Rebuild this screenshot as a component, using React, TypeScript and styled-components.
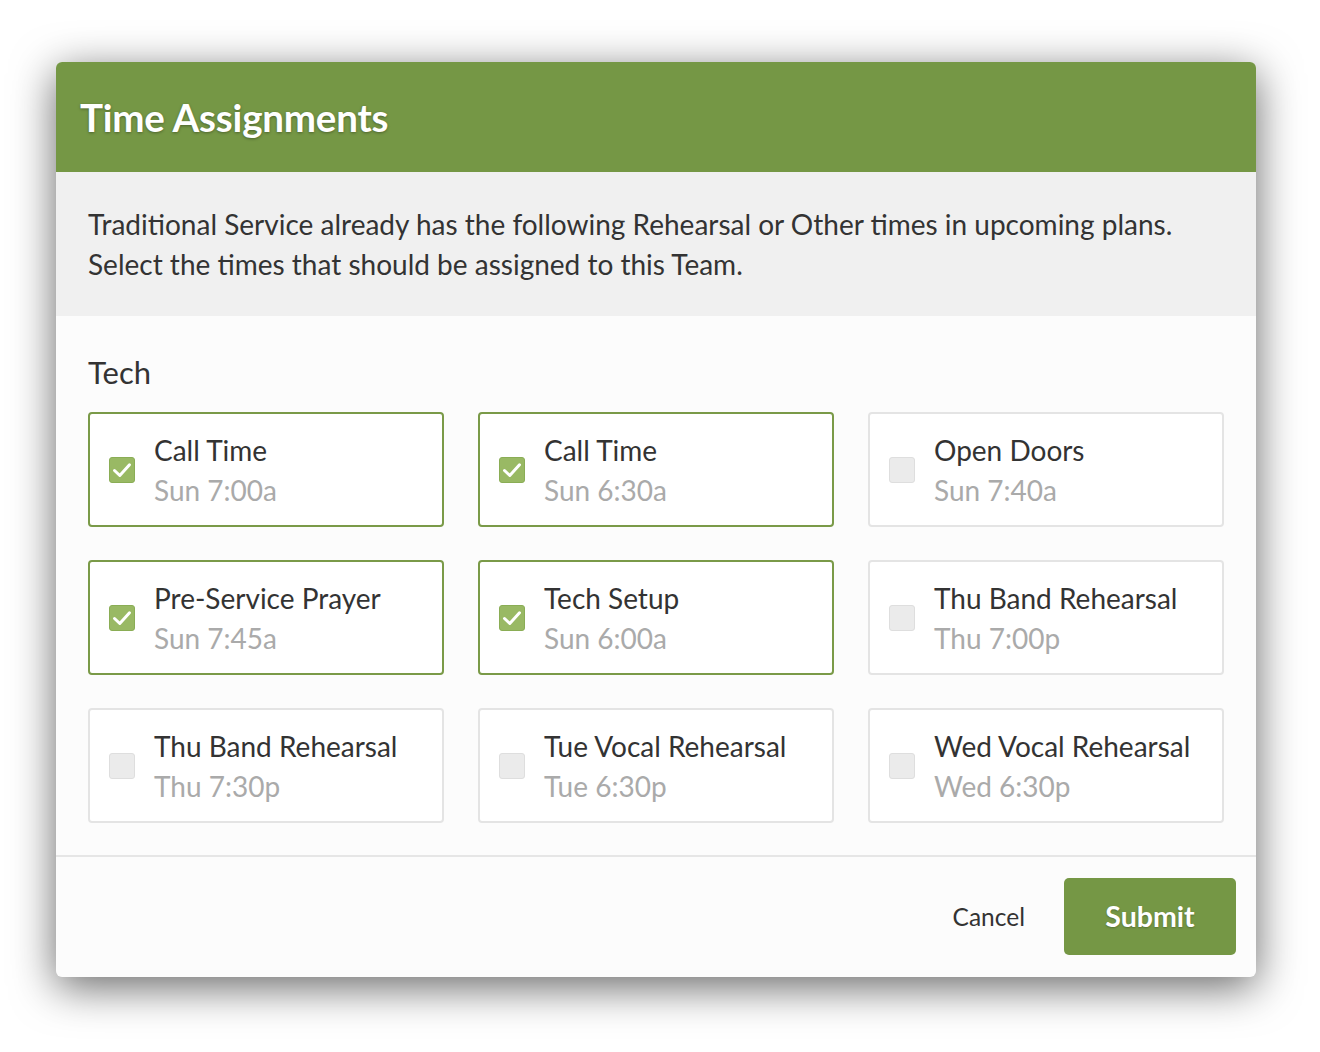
import React from "react";
import styled, { createGlobalStyle } from "styled-components";

const Global = createGlobalStyle`
  html, body { margin: 0; padding: 0; background: #ffffff; }
  body { font-family: Lato, "Open Sans", "Liberation Sans", sans-serif; }
  * { box-sizing: border-box; }
`;

const Page = styled.div`
  width: 1320px;
  height: 1052px;
  padding: 62px 64px 0 56px;
`;

const Modal = styled.div`
  width: 1200px;
  border-radius: 6px;
  background: #fcfcfc;
  box-shadow: 0 10px 44px rgba(0, 0, 0, 0.6);
  overflow: hidden;
`;

const Header = styled.div`
  height: 110px;
  background: #759745;
  display: flex;
  align-items: center;
  padding: 0 24px;
`;

const Title = styled.h1`
  margin: 0;
  font-size: 38.5px;
  font-weight: 700;
  color: #ffffff;
  text-shadow: 0 1px 3px rgba(0, 0, 0, 0.35);
  letter-spacing: -0.2px;
`;

const Intro = styled.div`
  height: 144px;
  background: #f0f0f0;
  padding: 32px 32px;
  font-size: 28px;
  line-height: 40px;
  color: #333333;
`;

const Body = styled.div`
  padding: 36px 32px 32px;
  background: #fcfcfc;
`;

const Section = styled.h2`
  margin: 0 0 20px;
  font-size: 31px;
  line-height: 40px;
  font-weight: 400;
  color: #333333;
`;

const Grid = styled.div`
  display: grid;
  grid-template-columns: repeat(3, 356px);
  column-gap: 34px;
  row-gap: 33px;
`;

const Card = styled.label<{ $on: boolean }>`
  height: 115px;
  border: 2px solid ${(p) => (p.$on ? "#7a9a48" : "#e4e4e4")};
  border-radius: 4px;
  background: #ffffff;
  display: flex;
  align-items: center;
  gap: 19px;
  padding-left: 19px;
  cursor: pointer;
`;

const Box = styled.span<{ $on: boolean }>`
  width: 26px;
  height: 26px;
  border-radius: 3px;
  flex: none;
  display: flex;
  align-items: center;
  justify-content: center;
  background: ${(p) => (p.$on ? "#99b964" : "#ebebeb")};
  border: 1px solid ${(p) => (p.$on ? "#8aad55" : "#dedede")};
`;

const Texts = styled.div`
  display: flex;
  flex-direction: column;
`;

const Name = styled.span`
  font-size: 28px;
  line-height: 40px;
  color: #333333;
`;

const When = styled.span`
  font-size: 28px;
  line-height: 40px;
  color: #aaaaaa;
`;

const Footer = styled.div`
  height: 122px;
  border-top: 2px solid #e6e6e6;
  display: flex;
  align-items: center;
  justify-content: flex-end;
  padding: 0 20px 2px 0;
  gap: 39px;
`;

const Cancel = styled.button`
  border: none;
  background: none;
  padding: 0;
  font-family: inherit;
  font-size: 24.5px;
  color: #333333;
  cursor: pointer;
`;

const Submit = styled.button`
  width: 172px;
  height: 77px;
  border: none;
  border-radius: 5px;
  background: #759745;
  color: #ffffff;
  font-family: inherit;
  font-size: 28.5px;
  font-weight: 700;
  text-shadow: 0 1px 2px rgba(0, 0, 0, 0.25);
  cursor: pointer;
`;

const items = [
  { name: "Call Time", when: "Sun 7:00a", on: true },
  { name: "Call Time", when: "Sun 6:30a", on: true },
  { name: "Open Doors", when: "Sun 7:40a", on: false },
  { name: "Pre-Service Prayer", when: "Sun 7:45a", on: true },
  { name: "Tech Setup", when: "Sun 6:00a", on: true },
  { name: "Thu Band Rehearsal", when: "Thu 7:00p", on: false },
  { name: "Thu Band Rehearsal", when: "Thu 7:30p", on: false },
  { name: "Tue Vocal Rehearsal", when: "Tue 6:30p", on: false },
  { name: "Wed Vocal Rehearsal", when: "Wed 6:30p", on: false },
];

const Check = () => (
  <svg width="22" height="22" viewBox="0 0 22 22" fill="none">
    <path d="M3.5 11.5 L8.8 16.5 L18.5 5.8" stroke="#ffffff" strokeWidth="3" strokeLinecap="round" strokeLinejoin="round" />
  </svg>
);

export default function App() {
  return (
    <>
      <Global />
      <Page>
        <Modal>
          <Header>
            <Title>Time Assignments</Title>
          </Header>
          <Intro>
            Traditional Service already has the following Rehearsal or Other times in upcoming plans.
            <br />
            Select the times that should be assigned to this Team.
          </Intro>
          <Body>
            <Section>Tech</Section>
            <Grid>
              {items.map((it, i) => (
                <Card key={i} $on={it.on}>
                  <Box $on={it.on}>{it.on && <Check />}</Box>
                  <Texts>
                    <Name>{it.name}</Name>
                    <When>{it.when}</When>
                  </Texts>
                </Card>
              ))}
            </Grid>
          </Body>
          <Footer>
            <Cancel>Cancel</Cancel>
            <Submit>Submit</Submit>
          </Footer>
        </Modal>
      </Page>
    </>
  );
}
